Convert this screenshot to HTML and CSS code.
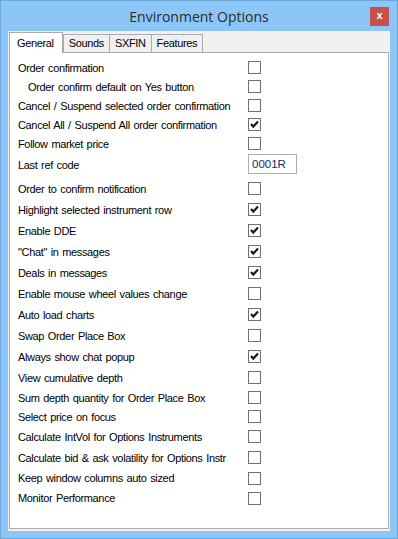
FILE: index.html
```html
<!DOCTYPE html>
<html lang="en">
<head>
<meta charset="utf-8">
<title>Environment Options</title>
<link rel="stylesheet" href="styles.css">
</head>
<body>
<div class="window">
    <div class="titlebar">
        <span class="title">Environment Options</span>
        <span class="close">x</span>
    </div>
    <div class="client">
        <div class="tabs">
            <span class="tab active">General</span>
            <span class="tab">Sounds</span>
            <span class="tab">SXFIN</span>
            <span class="tab">Features</span>
        </div>
        <div class="panel">
            <div class="row h19"><span class="label">Order confirmation</span><span class="cb"></span></div>
            <div class="row h19"><span class="label sub">Order confirm default on Yes button</span><span class="cb"></span></div>
            <div class="row h19"><span class="label">Cancel / Suspend selected order confirmation</span><span class="cb"></span></div>
            <div class="row h19"><span class="label">Cancel All / Suspend All order confirmation</span><span class="cb on"><svg viewBox="0 0 11 11"><path d="M2 5 L4.3 7.6 L9 2.4"/></svg></span></div>
            <div class="row h19"><span class="label">Follow market price</span><span class="cb"></span></div>
            <div class="row ref"><span class="label">Last ref code</span><span class="field">0001R</span></div>
            <div class="row"><span class="label">Order to confirm notification</span><span class="cb"></span></div>
            <div class="row"><span class="label">Highlight selected instrument row</span><span class="cb on"><svg viewBox="0 0 11 11"><path d="M2 5 L4.3 7.6 L9 2.4"/></svg></span></div>
            <div class="row"><span class="label">Enable DDE</span><span class="cb on"><svg viewBox="0 0 11 11"><path d="M2 5 L4.3 7.6 L9 2.4"/></svg></span></div>
            <div class="row"><span class="label">"Chat" in messages</span><span class="cb on"><svg viewBox="0 0 11 11"><path d="M2 5 L4.3 7.6 L9 2.4"/></svg></span></div>
            <div class="row"><span class="label">Deals in messages</span><span class="cb on"><svg viewBox="0 0 11 11"><path d="M2 5 L4.3 7.6 L9 2.4"/></svg></span></div>
            <div class="row"><span class="label">Enable mouse wheel values change</span><span class="cb"></span></div>
            <div class="row"><span class="label">Auto load charts</span><span class="cb on"><svg viewBox="0 0 11 11"><path d="M2 5 L4.3 7.6 L9 2.4"/></svg></span></div>
            <div class="row"><span class="label">Swap Order Place Box</span><span class="cb"></span></div>
            <div class="row"><span class="label">Always show chat popup</span><span class="cb on"><svg viewBox="0 0 11 11"><path d="M2 5 L4.3 7.6 L9 2.4"/></svg></span></div>
            <div class="row"><span class="label">View cumulative depth</span><span class="cb"></span></div>
            <div class="row h19"><span class="label">Sum depth quantity for Order Place Box</span><span class="cb"></span></div>
            <div class="row h19"><span class="label">Select price on focus</span><span class="cb"></span></div>
            <div class="row"><span class="label">Calculate IntVol for Options Instruments</span><span class="cb"></span></div>
            <div class="row"><span class="label">Calculate bid &amp; ask volatility for Options Instr</span><span class="cb"></span></div>
            <div class="row h20"><span class="label">Keep window columns auto sized</span><span class="cb"></span></div>
            <div class="row h20"><span class="label">Monitor Performance</span><span class="cb"></span></div>
        </div>
    </div>
</div>
</body>
</html>
```
FILE: styles.css
```css
body {
    margin: 0;
    padding: 0;
    font: 11px "Liberation Sans", Arial, sans-serif;
    color: #000;
}

.window {
    box-sizing: border-box;
    width: 398px;
    height: 539px;
    padding: 0 7px 7px 7px;
    background: #8cc6f7;
    border: 1px solid #6ca7dc;
    display: flex;
    flex-direction: column;
}

.titlebar {
    height: 30px;
    flex: none;
    display: grid;
    grid-template-columns: 1fr auto 1fr;
    align-items: start;
}

.title {
    grid-column: 2;
    margin-top: 6px;
    font: 14px "Open Sans", "Noto Sans", sans-serif;
    color: #2b2b2b;
    white-space: nowrap;
}

.close {
    grid-column: 3;
    justify-self: end;
    margin: 6px 1px 0 0;
    width: 19px;
    height: 19px;
    background: #c75050;
    color: #fff;
    font: bold 11px "Liberation Sans", Arial, sans-serif;
    line-height: 17px;
    text-align: center;
}

.client {
    flex: 1;
    background: #f0f0f0;
    padding: 1px 1px 2px 1px;
    display: flex;
    flex-direction: column;
}

.tabs {
    display: flex;
    align-items: flex-end;
    height: 20px;
    position: relative;
    z-index: 1;
}

.tab {
    box-sizing: border-box;
    height: 18px;
    padding: 0 5px;
    border: 1px solid #acacac;
    border-bottom: none;
    margin-left: -1px;
    background: #f0f0f0;
    letter-spacing: -0.35px;
    line-height: 17px;
}

.tab.active {
    height: 21px;
    margin: 0 0 -1px 0;
    padding: 2px 8px 0 7px;
    background: #fff;
    line-height: 16px;
    z-index: 2;
}

.tab.active + .tab {
    margin-left: 0;
}

.panel {
    flex: 1;
    background: #fff;
    border: 1px solid #acacac;
    padding: 5px 0 0 8px;
}

.row {
    height: 21px;
    display: grid;
    grid-template-columns: 230px 13px;
    align-items: center;
}

.row.h19 {
    height: 19px;
}

.row.h20 {
    height: 20px;
}

.row.ref {
    height: 25px;
    align-items: start;
}

.label {
    letter-spacing: -0.35px;
    word-spacing: 1px;
    white-space: nowrap;
}

.row.ref .label {
    margin-top: 6px;
}

.label.sub {
    padding-left: 10px;
}

.cb {
    box-sizing: border-box;
    width: 13px;
    height: 13px;
    border: 1px solid #707070;
    background: #fff;
}

.cb svg {
    display: block;
    width: 11px;
    height: 11px;
}

.cb svg path {
    fill: none;
    stroke: #1a1a1a;
    stroke-width: 2.2;
}

.field {
    box-sizing: border-box;
    width: 49px;
    height: 20px;
    margin-top: 1px;
    padding: 3px 0 0 3px;
    border: 1px solid #abadb3;
    background: #fff;
    font-size: 11.5px;
    color: #1c2a5c;
}
```
